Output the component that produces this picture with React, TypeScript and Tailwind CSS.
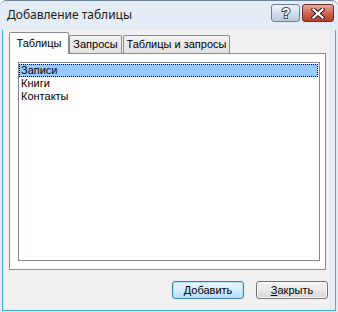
import React from "react";

// Окно "Добавление таблицы" в стиле Windows 7 Basic
const font = { fontFamily: '"Liberation Sans", Arial, sans-serif' };

const items = ["Записи", "Книги", "Контакты"];

function HelpButton() {
  return (
    <div className="w-[29px] h-[18px] rounded-[3px] border border-[#6b7f99] bg-gradient-to-b from-[#eef3fa] via-[#d3deec] to-[#b9c9de] flex items-center justify-center">
      <svg width="12" height="14" viewBox="0 0 12 14">
        <text
          x="6"
          y="12"
          textAnchor="middle"
          fontSize="14"
          fontWeight="700"
          fontFamily="Liberation Sans, Arial, sans-serif"
          fill="#ffffff"
          stroke="#3b4a5e"
          strokeWidth="2"
          paintOrder="stroke"
        >
          ?
        </text>
      </svg>
    </div>
  );
}

function CloseButton() {
  return (
    <div className="w-[32px] h-[18px] rounded-[3px] border border-[#6b2c25] bg-gradient-to-b from-[#e9a898] via-[#d0685a] to-[#b93d2c] flex items-center justify-center">
      <svg width="14" height="11" viewBox="0 0 14 11">
        <path d="M2.5 1.5 L11.5 9.5 M11.5 1.5 L2.5 9.5" stroke="#3a1a16" strokeWidth="4.2" strokeLinecap="square" />
        <path d="M2.5 1.5 L11.5 9.5 M11.5 1.5 L2.5 9.5" stroke="#ffffff" strokeWidth="2.2" strokeLinecap="square" />
      </svg>
    </div>
  );
}

export default function App() {
  return (
    <div
      className="w-[338px] h-[312px] flex flex-col bg-[#e4ecf6] border-t border-[#6d8099] rounded-t-[6px] overflow-hidden text-[11px] text-black"
      style={font}
    >
      {/* Заголовок */}
      <div className="h-[29px] flex items-start pt-[3px] pl-[7px] pr-[4px]">
        <span
          className="flex-1 leading-[22px] text-[12px] text-[#1b1b1b]"
          style={{ fontFamily: '"Noto Sans", "Open Sans", sans-serif' }}
        >
          Добавление таблицы
        </span>
        <div className="flex gap-[2px]">
          <HelpButton />
          <CloseButton />
        </div>
      </div>

      {/* Рамка и клиентская область */}
      <div className="flex-1 flex mx-[2px] mb-[1px] border-x border-b border-[#3caee6] pl-[1px] pr-[6px] pb-[1px]">
        <div className="flex-1 bg-[#f0f0f0] flex flex-col">
          {/* Вкладки */}
          <div className="flex items-end pl-[5px] pt-[2px] h-[23px]">
            <div className="relative z-10 -mb-[1px] h-[22px] w-[60px] bg-white border-x border-t border-[#898c95] rounded-t-[2px] flex items-center justify-center">
              Таблицы
            </div>
            <div className="h-[18px] w-[53px] border-x border-t border-[#898c95] rounded-t-[2px] bg-gradient-to-b from-[#f3f3f3] to-[#e2e2e2] flex items-center justify-center">
              Запросы
            </div>
            <div className="ml-[1px] h-[18px] w-[107px] border-x border-t border-[#898c95] rounded-t-[2px] bg-gradient-to-b from-[#f3f3f3] to-[#e2e2e2] flex items-center justify-center">
              Таблицы и запросы
            </div>
          </div>

          {/* Панель вкладки */}
          <div className="ml-[5px] w-[317px] h-[217px] bg-white border border-[#898c95] pt-[8px] pl-[8px]">
            <div className="w-[302px] h-[199px] border border-[#828790] pt-[1px] pr-[1px]">
              {items.map((name, i) =>
                i === 0 ? (
                  <div
                    key={name}
                    className="h-[13px] leading-[11px] bg-[#99c8ff] border border-dotted border-black pl-[1px]"
                  >
                    {name}
                  </div>
                ) : (
                  <div key={name} className="h-[13px] leading-[13px] pl-[2px]">
                    {name}
                  </div>
                )
              )}
            </div>
          </div>

          {/* Кнопки */}
          <div className="flex justify-end gap-[12px] mt-[11px] pr-[1px]">
            <button className="w-[72px] h-[18px] rounded-[3px] border border-[#3c7fb1] bg-gradient-to-b from-[#e8f5fd] via-[#d3ecfa] to-[#b4def6] shadow-[inset_0_0_0_1px_#b8e1f7] leading-[16px]">
              Добавить
            </button>
            <button className="w-[72px] h-[18px] rounded-[3px] border border-[#707070] bg-gradient-to-b from-[#f4f4f4] via-[#e8e8e8] to-[#d4d4d4] shadow-[inset_0_0_0_1px_#fbfbfb] leading-[16px]">
              <span className="underline">З</span>акрыть
            </button>
          </div>
        </div>
      </div>
    </div>
  );
}
